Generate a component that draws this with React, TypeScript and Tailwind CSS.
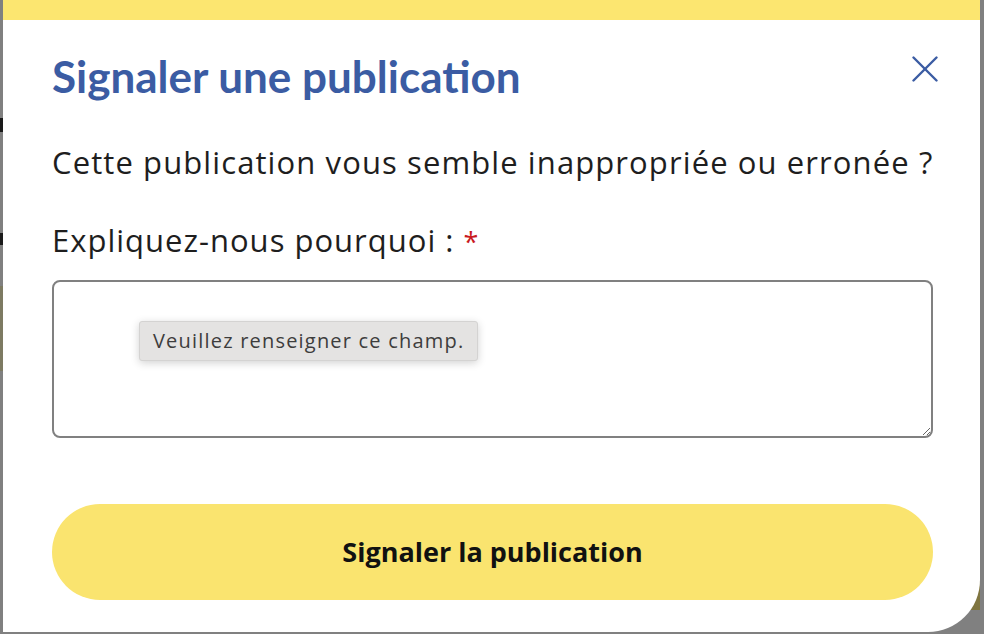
import React from 'react';

const font = { fontFamily: '"Open Sans", "Noto Sans", sans-serif' };

function CloseIcon() {
  return (
    <svg width="26" height="26" viewBox="0 0 26 26" fill="none" stroke="#3b5ca3" strokeWidth="2.4" strokeLinecap="round">
      <path d="M1.5 1.5 24.5 24.5" />
      <path d="M24.5 1.5 1.5 24.5" />
    </svg>
  );
}

export default function App() {
  return (
    <div className="w-[984px] h-[634px] bg-[#808080] flex overflow-hidden" style={font}>
      {/* dimmed page behind, left edge */}
      <div className="w-[3px] flex flex-col">
        <div className="h-[118px]" />
        <div className="h-[14px] bg-[#1a1a1a]" />
        <div className="h-[101px]" />
        <div className="h-[12px] bg-[#1a1a1a]" />
        <div className="h-[41px]" />
        <div className="h-[85px] bg-[#7d7a62]" />
      </div>

      <div className="relative w-[977px] h-[632px]">
        <div className="absolute right-0 top-[548px] w-[30px] h-[62px] bg-[#7f7540]" />
        <div className="relative h-full bg-white rounded-br-[52px] overflow-hidden flex flex-col">
          <div className="h-[20px] bg-[#fce670] shrink-0" />

          <div className="pl-[49px] pr-[47px] flex flex-col">
            <div className="flex items-start justify-between mt-[26px]">
              <h1
                className="text-[44px] leading-[60px] font-bold text-[#3b5ca3]"
                style={{ fontFamily: 'Lato, "Open Sans", sans-serif' }}
              >
                Signaler une publication
              </h1>
              <button className="mt-[10px] mr-[-5px] p-0">
                <CloseIcon />
              </button>
            </div>

            <p className="mt-[36px] whitespace-nowrap text-[31px] leading-[40px] tracking-[1.1px] text-[#1e1e1e]">
              Cette publication vous semble inappropriée ou erronée ?
            </p>

            <label className="mt-[38px] text-[31px] leading-[40px] tracking-[1px] text-[#1e1e1e]">
              Expliquez-nous pourquoi : <span className="text-[27px] text-[#c9191e]">*</span>
            </label>

            <div className="relative mt-[18px]">
              <textarea
                className="block w-full h-[158px] border-2 border-[#808080] rounded-[8px] bg-white outline-none"
                defaultValue=""
              />
              <div className="absolute left-[87px] top-[41px] h-[40px] px-[13px] flex items-center bg-[#e4e3e2] border border-[#d4d3d2] rounded-[3px] shadow-[0_2px_8px_rgba(0,0,0,0.18)] text-[20px] tracking-[1.2px] text-[#3d3d3d]">
                Veuillez renseigner ce champ.
              </div>
            </div>

            <button className="mt-[66px] h-[96px] w-full rounded-full bg-[#fae46f] text-[27px] font-bold text-[#111111]">
              Signaler la publication
            </button>
          </div>
        </div>
      </div>

      <div className="flex-1" />
    </div>
  );
}
